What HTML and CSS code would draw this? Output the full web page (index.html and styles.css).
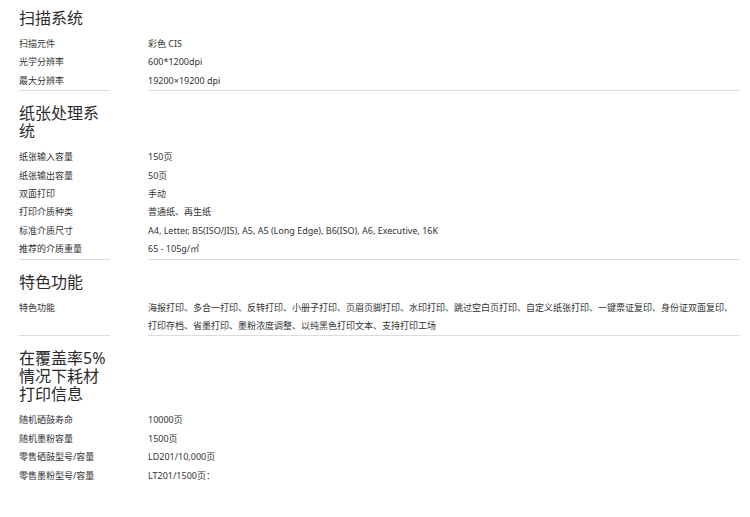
FILE: index.html
```html
<!DOCTYPE html>
<html lang="zh-CN">

<head>
    <meta charset="UTF-8">
    <meta name="viewport" content="width=device-width, initial-scale=1.0">
    <title>产品参数</title>
    <link rel="stylesheet" href="styles.css">
</head>

<body>
    <div class="specs">
        <section class="spec-group">
            <h2>扫描系统</h2>
            <dl class="spec-list">
                <dt>扫描元件</dt>
                <dd>彩色 CIS</dd>
                <dt>光学分辨率</dt>
                <dd>600*1200dpi</dd>
                <dt>最大分辨率</dt>
                <dd>19200×19200 dpi</dd>
            </dl>
        </section>

        <section class="spec-group">
            <h2>纸张处理系统</h2>
            <dl class="spec-list">
                <dt>纸张输入容量</dt>
                <dd>150页</dd>
                <dt>纸张输出容量</dt>
                <dd>50页</dd>
                <dt>双面打印</dt>
                <dd>手动</dd>
                <dt>打印介质种类</dt>
                <dd>普通纸、再生纸</dd>
                <dt>标准介质尺寸</dt>
                <dd>A4, Letter, B5(ISO/JIS), A5, A5 (Long Edge), B6(ISO), A6, Executive, 16K</dd>
                <dt>推荐的介质重量</dt>
                <dd>65 - 105g/㎡</dd>
            </dl>
        </section>

        <section class="spec-group">
            <h2>特色功能</h2>
            <dl class="spec-list">
                <dt>特色功能</dt>
                <dd>海报打印、多合一打印、反转打印、小册子打印、页眉页脚打印、水印打印、跳过空白页打印、自定义纸张打印、一键票证复印、身份证双面复印、打印存档、省墨打印、墨粉浓度调整、以纯黑色打印文本、支持打印工场</dd>
            </dl>
        </section>

        <section class="spec-group last">
            <h2>在覆盖率5%情况下耗材打印信息</h2>
            <dl class="spec-list">
                <dt>随机硒鼓寿命</dt>
                <dd>10000页</dd>
                <dt>随机墨粉容量</dt>
                <dd>1500页</dd>
                <dt>零售硒鼓型号/容量</dt>
                <dd>LD201/10,000页</dd>
                <dt>零售墨粉型号/容量</dt>
                <dd>LT201/1500页：</dd>
            </dl>
        </section>
    </div>
</body>

</html>
```

FILE: styles.css
```css
body {
    font-family: 'Noto Sans', 'Noto Sans CJK SC', sans-serif;
    background-color: #fff;
    color: #333;
    margin: 0;
    padding: 9px 10px 0 19px;
}

.spec-group {
    margin-top: 13px;
}

.spec-group:first-child {
    margin-top: 0;
}

.spec-group h2 {
    width: 91px;
    margin: 0 0 8px;
    font-size: 16px;
    line-height: 18px;
    font-weight: normal;
    color: #2b2b2b;
}

.spec-list {
    display: grid;
    grid-template-columns: 91px 592px;
    column-gap: 38px;
    margin: 0;
    font-size: 9px;
    line-height: 18.4px;
}

.spec-list dt,
.spec-list dd {
    margin: 0;
    white-space: normal;
}

.spec-list dt:last-of-type,
.spec-list dd:last-of-type {
    border-bottom: 1px solid #dcdcdc;
}

.spec-group.last .spec-list dt:last-of-type,
.spec-group.last .spec-list dd:last-of-type {
    border-bottom: none;
}
```
